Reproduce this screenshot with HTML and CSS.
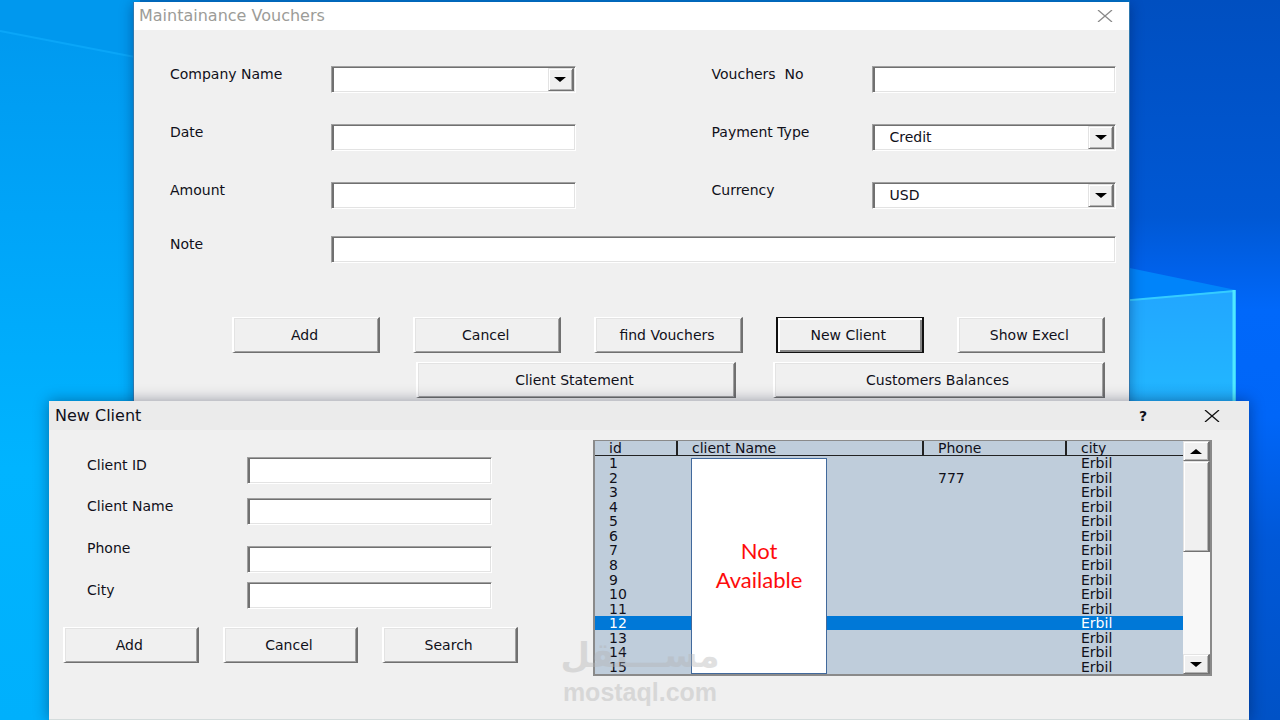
FILE: index.html
```html
<!DOCTYPE html>
<html lang="en">
<head>
<meta charset="utf-8">
<title>Maintainance Vouchers</title>
<link rel="stylesheet" href="styles.css">
</head>
<body>
<main class="desktop">
  <svg class="wallpaper" viewBox="0 0 1280 720" preserveAspectRatio="none" aria-hidden="true">
    <defs>
      <linearGradient id="left" x1="0" y1="0" x2="0" y2="1">
        <stop offset="0" stop-color="#0098ee"/>
        <stop offset=".3" stop-color="#00a4f8"/>
        <stop offset=".65" stop-color="#00b4ff"/>
        <stop offset="1" stop-color="#00b0fc"/>
      </linearGradient>
      <linearGradient id="right" x1="0" y1="0" x2="0" y2="1">
        <stop offset="0" stop-color="#004fc0"/>
        <stop offset=".3" stop-color="#0058d4"/>
        <stop offset=".43" stop-color="#0068fa"/>
        <stop offset=".58" stop-color="#0066f8"/>
        <stop offset=".75" stop-color="#0058d8"/>
        <stop offset="1" stop-color="#0052c6"/>
      </linearGradient>
      <linearGradient id="pane" x1="0" y1="0" x2="0" y2="1">
        <stop offset="0" stop-color="#22a6ff"/>
        <stop offset=".7" stop-color="#22b4ff"/>
        <stop offset="1" stop-color="#1ca6f6"/>
      </linearGradient>
      <linearGradient id="beam" x1="0" y1="0" x2="1" y2="0">
        <stop offset="0" stop-color="#0070e6" />
        <stop offset="1" stop-color="#0068fa" />
      </linearGradient>
    </defs>
    <rect width="640" height="720" fill="url(#left)"/>
    <rect x="640" width="640" height="720" fill="url(#right)"/>
    <rect x="133" width="997" height="3" fill="#0074cc"/>
    <path d="M0 0H140V57L0 31Z" fill="#0098ee"/>
    <path d="M0 31L140 58" stroke="#0aa6f8" stroke-width="2"/>
    <path d="M1120 266L1236 290V300H1120Z" fill="#0084fa"/>
    <path d="M1120 301L1236 290V420H1120Z" fill="url(#pane)"/>
    <path d="M1120 301L1235 291" stroke="#35ccff" stroke-width="2"/>
    <path d="M1234 290V420" stroke="#4fe8ff" stroke-width="3"/>
  </svg>

  <section class="window vouchers" aria-label="Maintainance Vouchers">
    <header class="titlebar">
      <h1 class="title">Maintainance Vouchers</h1>
      <button class="caption-button" type="button" aria-label="Close"><svg width="16" height="12" viewBox="0 0 16 12"><path d="M1 0L15 12M15 0L1 12"/></svg></button>
    </header>
    <form class="voucher-form">
      <div class="fields">
        <label for="company">Company Name</label>
        <div class="combo">
          <select id="company"><option></option></select>
          <span class="drop"><svg width="12" height="5" viewBox="0 0 12 5"><path d="M0 0H12L6 5Z"/></svg></span>
        </div>
        <label class="second" for="number">Vouchers &nbsp;No</label>
        <input id="number" type="text">
        <label for="date">Date</label>
        <input id="date" type="text">
        <label class="second" for="payment">Payment Type</label>
        <div class="combo">
          <select id="payment"><option>Credit</option></select>
          <span class="drop"><svg width="12" height="5" viewBox="0 0 12 5"><path d="M0 0H12L6 5Z"/></svg></span>
        </div>
        <label for="amount">Amount</label>
        <input id="amount" type="text">
        <label class="second" for="currency">Currency</label>
        <div class="combo">
          <select id="currency"><option>USD</option></select>
          <span class="drop"><svg width="12" height="5" viewBox="0 0 12 5"><path d="M0 0H12L6 5Z"/></svg></span>
        </div>
        <label for="note">Note</label>
        <input id="note" class="wide" type="text">
      </div>
      <div class="actions">
        <button class="push" type="button">Add</button>
        <button class="push" type="button">Cancel</button>
        <button class="push" type="button">find Vouchers</button>
        <button class="push default" type="button">New Client</button>
        <button class="push" type="button">Show Execl</button>
      </div>
      <div class="reports">
        <button class="push" type="button">Client Statement</button>
        <button class="push" type="button">Customers Balances</button>
      </div>
    </form>
  </section>

  <section class="window client" aria-label="New Client">
    <header class="titlebar">
      <h2 class="title">New Client</h2>
      <button class="caption-button help" type="button" aria-label="Help">?</button>
      <button class="caption-button" type="button" aria-label="Close"><svg width="16" height="12" viewBox="0 0 16 12"><path d="M1 0L15 12M15 0L1 12"/></svg></button>
    </header>
    <div class="client-body">
      <form class="client-form">
        <div class="client-fields">
          <label for="client-id">Client ID</label>
          <input id="client-id" type="text">
          <label for="client-name">Client Name</label>
          <input id="client-name" type="text">
          <label for="phone">Phone</label>
          <input id="phone" class="lowered" type="text">
          <label for="city">City</label>
          <input id="city" type="text">
        </div>
        <div class="client-actions">
          <button class="push" type="button">Add</button>
          <button class="push" type="button">Cancel</button>
          <button class="push" type="button">Search</button>
        </div>
      </form>
      <div class="list">
        <table class="clients">
          <colgroup><col class="col-id"><col class="col-name"><col class="col-phone"><col></colgroup>
          <thead><tr><th>id</th><th>client Name</th><th>Phone</th><th>city</th></tr></thead>
          <tbody>
            <tr><td>1</td><td></td><td></td><td>Erbil</td></tr>
            <tr><td>2</td><td></td><td>777</td><td>Erbil</td></tr>
            <tr><td>3</td><td></td><td></td><td>Erbil</td></tr>
            <tr><td>4</td><td></td><td></td><td>Erbil</td></tr>
            <tr><td>5</td><td></td><td></td><td>Erbil</td></tr>
            <tr><td>6</td><td></td><td></td><td>Erbil</td></tr>
            <tr><td>7</td><td></td><td></td><td>Erbil</td></tr>
            <tr><td>8</td><td></td><td></td><td>Erbil</td></tr>
            <tr><td>9</td><td></td><td></td><td>Erbil</td></tr>
            <tr><td>10</td><td></td><td></td><td>Erbil</td></tr>
            <tr><td>11</td><td></td><td></td><td>Erbil</td></tr>
            <tr class="selected"><td>12</td><td></td><td></td><td>Erbil</td></tr>
            <tr><td>13</td><td></td><td></td><td>Erbil</td></tr>
            <tr><td>14</td><td></td><td></td><td>Erbil</td></tr>
            <tr><td>15</td><td></td><td></td><td>Erbil</td></tr>
          </tbody>
        </table>
        <div class="scrollbar">
          <button class="scroll-button" type="button" aria-label="Scroll up"><svg width="12" height="5" viewBox="0 0 12 5"><path d="M0 5H12L6 0Z"/></svg></button>
          <div class="thumb"></div>
          <div class="track"></div>
          <button class="scroll-button" type="button" aria-label="Scroll down"><svg width="12" height="5" viewBox="0 0 12 5"><path d="M0 0H12L6 5Z"/></svg></button>
        </div>
        <p class="cover">Not Available</p>
      </div>
    </div>
  </section>

  <div class="watermark">
    <span class="mark-arabic" lang="ar" dir="rtl">مســـتقل</span>
    <span class="mark-latin">mostaql.com</span>
  </div>
</main>
</body>
</html>
```

FILE: styles.css
```css
* {
  box-sizing: border-box;
}

body {
  margin: 0;
  font: 14px/16px "DejaVu Sans", sans-serif;
  color: #10101a;
}

button,
input,
select {
  font: inherit;
  color: inherit;
  border-radius: 0;
  margin: 0;
}

.desktop {
  position: relative;
  height: 100vh;
  overflow: hidden;
}

.wallpaper {
  display: block;
  width: 100%;
  height: 100%;
}

/* Windows */
.window {
  position: absolute;
  background: #f0f0f0;
}

.vouchers {
  top: 2px;
  left: 133px;
  right: 150px;
  bottom: 0;
  border: solid #2f78ae;
  border-width: 0 1px;
  box-shadow: 0 2px 12px rgba(0, 20, 70, .4);
}

.client {
  top: 401px;
  left: 49px;
  right: 31px;
  bottom: 0;
  border-bottom: 1px solid #d4dcdc;
  box-shadow: 0 0 14px rgba(0, 10, 40, .4);
}

.titlebar {
  display: flex;
  align-items: center;
  height: 28px;
  background: #fff;
}

.title {
  flex: 1;
  margin: 0;
  padding-left: 6px;
  font: 16px/20px "DejaVu Sans", sans-serif;
}

.vouchers .title {
  padding-left: 5px;
  color: #9c9c98;
}

.client .titlebar {
  height: 29px;
  padding-right: 13px;
  background: #ebebeb;
}

.caption-button {
  display: flex;
  align-items: center;
  justify-content: center;
  width: 48px;
  height: 28px;
  padding: 0;
  border: 0;
  background: none;
}

.caption-button path {
  fill: none;
  stroke: #111;
  stroke-width: 1.3;
}

.vouchers .caption-button path {
  stroke: #8a8a8a;
}

.help {
  width: 44px;
  margin-right: 23px;
  font-weight: bold;
}

/* Sunken fields */
input,
select {
  display: block;
  width: 100%;
  height: 27px;
  padding: 0 17px 2px;
  background: #fff;
  border: 1px solid;
  border-color: #a0a0a0 #fff #fff #a0a0a0;
  box-shadow: inset 2px 1px #707070, inset -1px -1px #e3e3e3;
  outline: 0;
}

select {
  appearance: none;
}

.combo {
  position: relative;
  height: 27px;
}

.drop {
  position: absolute;
  top: 2px;
  right: 2px;
  bottom: 2px;
  width: 26px;
  display: flex;
  align-items: center;
  justify-content: center;
  pointer-events: none;
}

.drop,
.scroll-button,
.thumb {
  background: #f0f0f0;
  border: solid;
  border-width: 1px 2px 1px 1px;
  border-color: #e3e3e3 #727272 #727272 #e3e3e3;
  box-shadow: inset 1px 1px #fff, inset -1px -1px #b4b4b4;
}

/* Raised buttons */
.push {
  height: 36px;
  padding: 0 3px 1px 0;
  background: #f0f0f0;
  border: solid;
  border-width: 1px 2px;
  border-color: #fff #707070 #707070 #fff;
  box-shadow: inset 1px 1px #e3e3e3, inset -1px -1px #a0a0a0;
}

.default {
  border-color: #111;
  box-shadow: inset 2px 2px #fff, inset -2px -2px #858585;
}

/* Voucher form */
.voucher-form {
  padding: 36px 13px 0 36px;
}

.fields {
  display: grid;
  grid-template-columns: 161px 1fr 296px 1fr;
  grid-template-rows: 58px 58px 54px 81px;
}

.second {
  padding-left: 136px;
}

.wide {
  grid-column: 2 / -1;
}

.actions {
  display: grid;
  grid-template-columns: repeat(5, 1fr);
  gap: 33px;
  padding: 0 11px 0 62px;
}

.reports {
  display: grid;
  grid-template-columns: 320fr 332fr;
  gap: 37px;
  padding: 9px 11px 0 246px;
}

/* Client window */
.client-body {
  display: grid;
  grid-template-columns: 469px 1fr;
  gap: 75px;
  padding: 10px 37px 0 0;
}

.client-form {
  padding: 17px 0 0 14px;
}

.client-fields {
  display: grid;
  grid-template-columns: 160px 245px;
  grid-template-rows: 41px 42px 42px 45px;
  padding-left: 24px;
}

.lowered {
  margin-top: 6px;
}

.client-actions {
  display: grid;
  grid-template-columns: repeat(3, 1fr);
  gap: 24px;
}

/* Client list */
.list {
  position: relative;
  display: flex;
  height: 236px;
  border: 1px solid #8a8a8a;
  border-width: 1px 2px 2px;
  background: #f0f0f0;
}

.clients {
  flex: 1;
  height: 233px;
  table-layout: fixed;
  border-collapse: separate;
  border-spacing: 0;
  background: #bfcddb;
}

.col-id {
  width: 83px;
}

.col-name {
  width: 246px;
}

.col-phone {
  width: 143px;
}

.clients th,
.clients td {
  height: 14px;
  padding: 0 0 0 14px;
  line-height: 14px;
  font-weight: normal;
  text-align: left;
}

.clients th {
  border-bottom: 1px solid #222;
}

.clients th:not(:last-child) {
  border-right: 2px solid #222;
}

.selected td {
  color: #fff;
  background: #0078d7;
}

.scrollbar {
  display: flex;
  flex-direction: column;
  width: 27px;
  background: #f8f8f8;
}

.scroll-button {
  display: flex;
  align-items: center;
  justify-content: center;
  height: 20px;
  padding: 0;
}

.thumb {
  height: 91px;
}

.track {
  flex: 1;
}

.cover {
  position: absolute;
  top: 17px;
  left: 96px;
  width: 136px;
  height: 216px;
  margin: 0;
  padding: 77px 20px 0;
  background: #fff;
  border: 1px solid #41699c;
  color: #fe0b0b;
  font: 22px/29px Lato, sans-serif;
  text-align: center;
}

/* Watermark */
.watermark {
  position: absolute;
  left: 562px;
  bottom: 13px;
  width: 156px;
  display: flex;
  flex-direction: column;
  align-items: center;
  color: #b4b4b4;
  opacity: .4;
  pointer-events: none;
}

.mark-arabic {
  font: bold 34px/44px "DejaVu Sans", sans-serif;
  white-space: nowrap;
}

.mark-latin {
  font: bold 25px/30px "Liberation Sans", sans-serif;
}
```
